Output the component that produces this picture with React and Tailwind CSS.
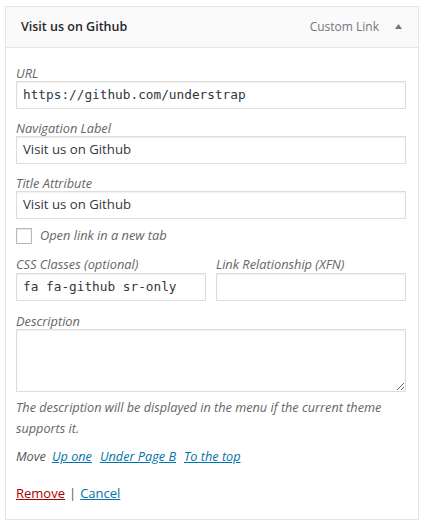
// WordPress menu item settings panel (custom link)
const sans = "font-['Open_Sans','Noto_Sans',sans-serif]";
const mono = "font-['DejaVu_Sans_Mono','Liberation_Mono',monospace]";

function Label({ children }) {
  return <div className="text-[12.8px] leading-[16px] italic text-[#666]">{children}</div>;
}

function TextInput({ value, monospace = false }) {
  return (
    <div
      className={`h-[28px] border border-[#ddd] bg-white px-[6px] flex items-center shadow-[inset_0_1px_2px_rgba(0,0,0,0.07)] text-[#32373c] ${
        monospace ? `${mono} text-[12.75px]` : 'text-[13.2px]'
      }`}
    >
      {value}
    </div>
  );
}

export default function App() {
  return (
    <div className={`min-h-screen bg-white pt-[6px] pl-[5px] ${sans}`}>
      <div className="w-[414px] border border-[#e5e5e5] bg-white">
        {/* header */}
        <div className="h-[41px] border-b border-[#e5e5e5] bg-[#fafafa] pl-[15px] pr-[10px] flex items-center">
          <div className="flex-1 text-[12.5px] font-semibold text-[#23282d]">Visit us on Github</div>
          <div className="text-[12px] text-[#72777c]">Custom Link</div>
          <svg width="7" height="5" viewBox="0 0 7 5" className="ml-[16px] mr-[6px] mb-[1px]">
            <path d="M3.5 0 L7 5 L0 5 Z" fill="#72777c" />
          </svg>
        </div>

        {/* settings */}
        <div className="pl-[10px] pr-[12px] pt-[17px] pb-[15px]">
          <Label>URL</Label>
          <TextInput value="https://github.com/understrap" monospace />

          <div className="mt-[11px]">
            <Label>Navigation Label</Label>
            <TextInput value="Visit us on Github" />
          </div>

          <div className="mt-[11px]">
            <Label>Title Attribute</Label>
            <TextInput value="Visit us on Github" />
          </div>

          <div className="mt-[9px] flex items-center h-[16px]">
            <div className="w-[16px] h-[16px] border border-[#b4b9be] bg-white shadow-[inset_0_1px_2px_rgba(0,0,0,0.1)]" />
            <span className="ml-[8px] text-[12.8px] italic text-[#666]">Open link in a new tab</span>
          </div>

          <div className="mt-[12px] flex gap-[10px]">
            <div className="w-[190px]">
              <Label>CSS Classes (optional)</Label>
              <div className="mt-[1px]">
                <TextInput value="fa fa-github sr-only" monospace />
              </div>
            </div>
            <div className="flex-1">
              <Label>Link Relationship (XFN)</Label>
              <div className="mt-[1px]">
                <TextInput value="" />
              </div>
            </div>
          </div>

          <div className="mt-[12px]">
            <Label>Description</Label>
            <textarea
              readOnly
              className="block w-full h-[63px] border border-[#ddd] bg-white shadow-[inset_0_1px_2px_rgba(0,0,0,0.07)] outline-none"
            />
          </div>

          <p className="mt-[5px] text-[12.7px] leading-[21px] italic text-[#666]">
            The description will be displayed in the menu if the current theme supports it.
          </p>

          <div className="mt-[7px] text-[12.7px] leading-[21px] italic text-[#555]">
            Move
            <a className="ml-[6px] text-[#0073aa] underline">Up one</a>
            <a className="ml-[8px] text-[#0073aa] underline">Under Page B</a>
            <a className="ml-[8px] text-[#0073aa] underline">To the top</a>
          </div>

          <div className="mt-[16px] text-[13px] leading-[21px] text-[#555]">
            <a className="text-[#a00] underline">Remove</a>
            <span className="mx-[4px]">|</span>
            <a className="text-[#0073aa] underline">Cancel</a>
          </div>
        </div>
      </div>
    </div>
  );
}
